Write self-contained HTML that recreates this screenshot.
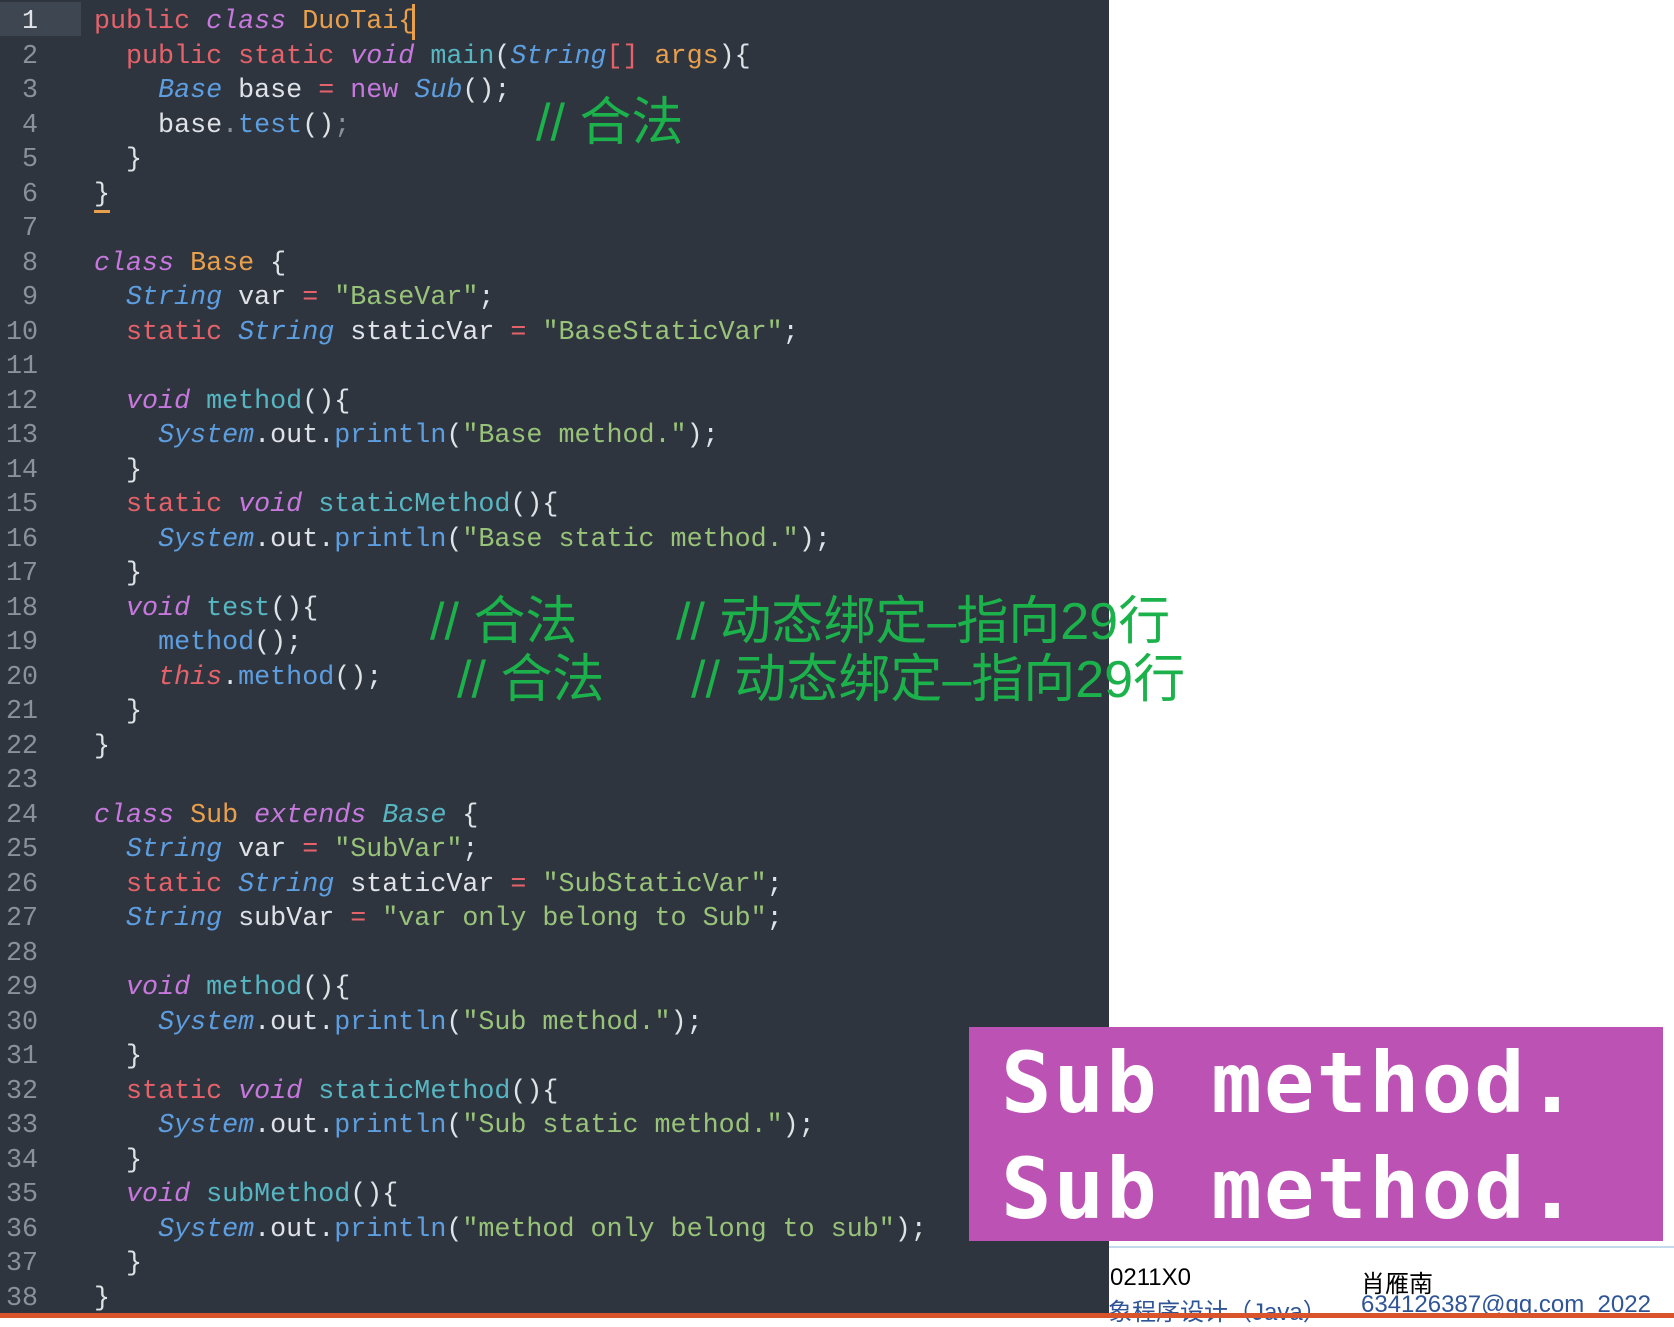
<!DOCTYPE html>
<html><head><meta charset="utf-8"><style>
body{margin:0;width:1674px;height:1318px;position:relative;background:#fff;overflow:hidden}
#ed{position:absolute;left:0;top:0;width:1109px;height:1314px;background:#2f353f}
.bot{position:absolute;left:0;top:1313px;width:1674px;height:5px;background:#d9542b}
.ln,.cd{position:absolute;font-family:"Liberation Mono","DejaVu Sans Mono",monospace;font-size:26.7px;line-height:34.5px;white-space:pre;margin-top:3px}
.ln{left:0;width:38px;text-align:right;color:#8a919b}
.cd{left:94px;color:#dfe2e7}
.k{color:#e5626b}.p{color:#c678dd;font-style:italic}.pn{color:#c678dd}.o{color:#e8a04c}.t{color:#56b6c2}.b{color:#5d9ee0;font-style:italic}.bb{color:#5d9ee0}.s{color:#98c379}.e{color:#e5626b}.ki{color:#e5626b;font-style:italic}.ti{color:#56b6c2;font-style:italic}.d{color:#8a919b}
.g{position:absolute;color:#1cb24b;font-family:"Liberation Sans","Noto Sans CJK SC",sans-serif;font-size:52px;line-height:56px;white-space:pre}
.gut{position:absolute;left:0;top:2px;width:81px;height:34px;background:#3e4652}
#pb{position:absolute;left:969px;top:1027px;width:694px;height:214px;background:#bd52b5}
#pb div{position:absolute;left:32px;color:#fff;font-family:"DejaVu Sans Mono","Liberation Mono",monospace;font-size:84px;font-weight:bold;line-height:100px;letter-spacing:2px}
.f{position:absolute;font-family:"Liberation Sans","Noto Sans CJK SC",sans-serif;font-size:24px;white-space:pre}
</style></head><body>
<div id="ed"></div>
<div class="gut"></div>
<div style="position:absolute;top:1246px;width:565px;height:0;border-top:2px solid #c5d9ec;left:1109px"></div>
<div class="ln" style="top:2px;color:#dfe2e7">1</div>
<div class="ln" style="top:36.5px">2</div><div class="ln" style="top:71px">3</div><div class="ln" style="top:105.5px">4</div><div class="ln" style="top:140px">5</div><div class="ln" style="top:174.5px">6</div><div class="ln" style="top:209px">7</div><div class="ln" style="top:243.5px">8</div><div class="ln" style="top:278px">9</div><div class="ln" style="top:312.5px">10</div><div class="ln" style="top:347px">11</div><div class="ln" style="top:381.5px">12</div><div class="ln" style="top:416px">13</div><div class="ln" style="top:450.5px">14</div><div class="ln" style="top:485px">15</div><div class="ln" style="top:519.5px">16</div><div class="ln" style="top:554px">17</div><div class="ln" style="top:588.5px">18</div><div class="ln" style="top:623px">19</div><div class="ln" style="top:657.5px">20</div><div class="ln" style="top:692px">21</div><div class="ln" style="top:726.5px">22</div><div class="ln" style="top:761px">23</div><div class="ln" style="top:795.5px">24</div><div class="ln" style="top:830px">25</div><div class="ln" style="top:864.5px">26</div><div class="ln" style="top:899px">27</div><div class="ln" style="top:933.5px">28</div><div class="ln" style="top:968px">29</div><div class="ln" style="top:1002.5px">30</div><div class="ln" style="top:1037px">31</div><div class="ln" style="top:1071.5px">32</div><div class="ln" style="top:1106px">33</div><div class="ln" style="top:1140.5px">34</div><div class="ln" style="top:1175px">35</div><div class="ln" style="top:1209.5px">36</div><div class="ln" style="top:1244px">37</div><div class="ln" style="top:1278.5px">38</div>

<div class="cd" style="top:2px"><span class="k">public</span> <span class="p">class</span> <span class="o">DuoTai{</span></div>
<div class="cd" style="top:36.5px">  <span class="k">public static</span> <span class="p">void</span> <span class="t">main</span>(<span class="b">String</span><span class="k">[]</span> <span class="o">args</span>){</div>
<div class="cd" style="top:71px">    <span class="b">Base</span> base <span class="e">=</span> <span class="pn">new</span> <span class="b">Sub</span>();</div>
<div class="cd" style="top:105.5px">    base<span class="d">.</span><span class="bb">test</span>()<span class="d">;</span></div>
<div class="cd" style="top:140px">  }</div>
<div class="cd" style="top:174.5px">}</div>
<div class="cd" style="top:243.5px"><span class="p">class</span> <span class="o">Base</span> {</div>
<div class="cd" style="top:278px">  <span class="b">String</span> var <span class="e">=</span> <span class="s">"BaseVar"</span>;</div>
<div class="cd" style="top:312.5px">  <span class="k">static</span> <span class="b">String</span> staticVar <span class="e">=</span> <span class="s">"BaseStaticVar"</span>;</div>
<div class="cd" style="top:381.5px">  <span class="p">void</span> <span class="t">method</span>(){</div>
<div class="cd" style="top:416px">    <span class="b">System</span>.out.<span class="bb">println</span>(<span class="s">"Base method."</span>);</div>
<div class="cd" style="top:450.5px">  }</div>
<div class="cd" style="top:485px">  <span class="k">static</span> <span class="p">void</span> <span class="t">staticMethod</span>(){</div>
<div class="cd" style="top:519.5px">    <span class="b">System</span>.out.<span class="bb">println</span>(<span class="s">"Base static method."</span>);</div>
<div class="cd" style="top:554px">  }</div>
<div class="cd" style="top:588.5px">  <span class="p">void</span> <span class="t">test</span>(){</div>
<div class="cd" style="top:623px">    <span class="bb">method</span>();</div>
<div class="cd" style="top:657.5px">    <span class="ki">this</span>.<span class="bb">method</span>();</div>
<div class="cd" style="top:692px">  }</div>
<div class="cd" style="top:726.5px">}</div>
<div class="cd" style="top:795.5px"><span class="p">class</span> <span class="o">Sub</span> <span class="p">extends</span> <span class="ti">Base</span> {</div>
<div class="cd" style="top:830px">  <span class="b">String</span> var <span class="e">=</span> <span class="s">"SubVar"</span>;</div>
<div class="cd" style="top:864.5px">  <span class="k">static</span> <span class="b">String</span> staticVar <span class="e">=</span> <span class="s">"SubStaticVar"</span>;</div>
<div class="cd" style="top:899px">  <span class="b">String</span> subVar <span class="e">=</span> <span class="s">"var only belong to Sub"</span>;</div>
<div class="cd" style="top:968px">  <span class="p">void</span> <span class="t">method</span>(){</div>
<div class="cd" style="top:1002.5px">    <span class="b">System</span>.out.<span class="bb">println</span>(<span class="s">"Sub method."</span>);</div>
<div class="cd" style="top:1037px">  }</div>
<div class="cd" style="top:1071.5px">  <span class="k">static</span> <span class="p">void</span> <span class="t">staticMethod</span>(){</div>
<div class="cd" style="top:1106px">    <span class="b">System</span>.out.<span class="bb">println</span>(<span class="s">"Sub static method."</span>);</div>
<div class="cd" style="top:1140.5px">  }</div>
<div class="cd" style="top:1175px">  <span class="p">void</span> <span class="t">subMethod</span>(){</div>
<div class="cd" style="top:1209.5px">    <span class="b">System</span>.out.<span class="bb">println</span>(<span class="s">"method only belong to sub"</span>);</div>
<div class="cd" style="top:1244px">  }</div>
<div class="cd" style="top:1278.5px">}</div>
<div style="position:absolute;left:94px;top:210px;width:16px;height:3px;background:#e8a04c"></div>
<div style="position:absolute;left:412px;top:4px;width:3px;height:36px;background:#e8a04c"></div>

<div class="g" style="left:536px;top:95px">// 合法</div>
<div class="g" style="left:430px;top:594px">// 合法</div>
<div class="g" style="left:676px;top:594px">// 动态绑定–指向29行</div>
<div class="g" style="left:457px;top:652px">// 合法</div>
<div class="g" style="left:691px;top:652px">// 动态绑定–指向29行</div>

<div id="pb"><div style="top:6px">Sub method.</div><div style="top:112px">Sub method.</div></div>
<div class="f" style="left:1110px;top:1264px;color:#000">0211X0</div>
<div class="f" style="left:1361px;top:1264px;color:#000">肖雁南</div>
<div class="f" style="left:1108px;top:1292px;color:#2f5597">象程序设计（Java）</div>
<div class="f" style="left:1361px;top:1291px;color:#2f5597">634126387@qq.com  2022</div>
<div class="bot"></div>
</body></html>
